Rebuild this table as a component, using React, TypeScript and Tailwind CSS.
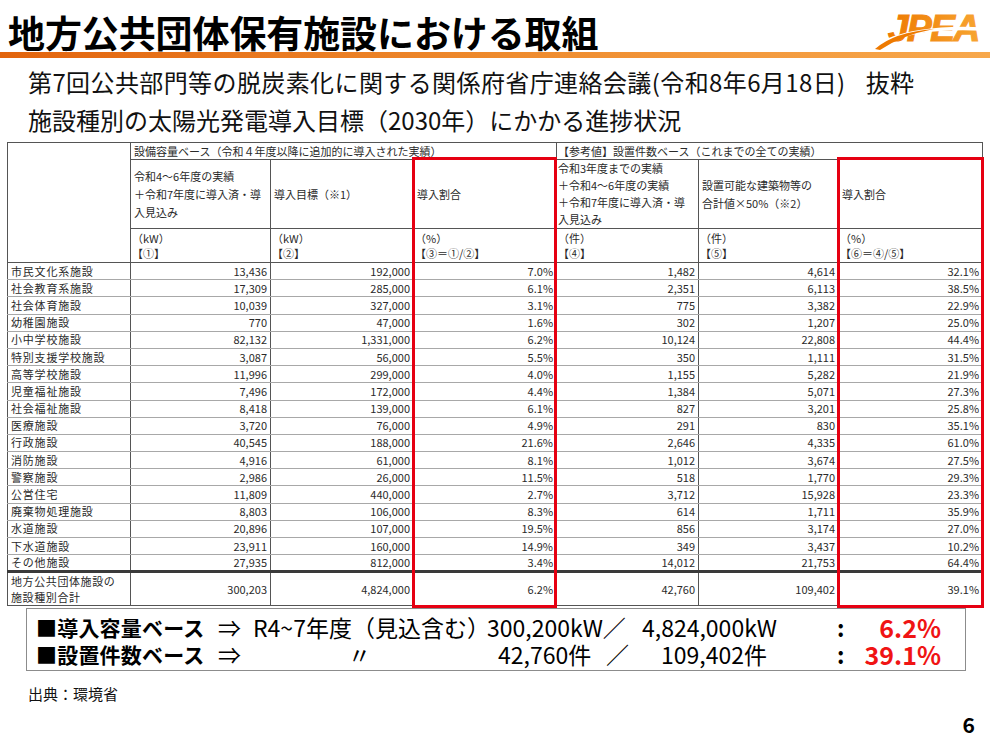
import React from "react";

type Row = [string, string, string, string, string, string, string];

const rows: Row[] = [
  ["市民文化系施設", "13,436", "192,000", "7.0%", "1,482", "4,614", "32.1%"],
  ["社会教育系施設", "17,309", "285,000", "6.1%", "2,351", "6,113", "38.5%"],
  ["社会体育施設", "10,039", "327,000", "3.1%", "775", "3,382", "22.9%"],
  ["幼稚園施設", "770", "47,000", "1.6%", "302", "1,207", "25.0%"],
  ["小中学校施設", "82,132", "1,331,000", "6.2%", "10,124", "22,808", "44.4%"],
  ["特別支援学校施設", "3,087", "56,000", "5.5%", "350", "1,111", "31.5%"],
  ["高等学校施設", "11,996", "299,000", "4.0%", "1,155", "5,282", "21.9%"],
  ["児童福祉施設", "7,496", "172,000", "4.4%", "1,384", "5,071", "27.3%"],
  ["社会福祉施設", "8,418", "139,000", "6.1%", "827", "3,201", "25.8%"],
  ["医療施設", "3,720", "76,000", "4.9%", "291", "830", "35.1%"],
  ["行政施設", "40,545", "188,000", "21.6%", "2,646", "4,335", "61.0%"],
  ["消防施設", "4,916", "61,000", "8.1%", "1,012", "3,674", "27.5%"],
  ["警察施設", "2,986", "26,000", "11.5%", "518", "1,770", "29.3%"],
  ["公営住宅", "11,809", "440,000", "2.7%", "3,712", "15,928", "23.3%"],
  ["廃棄物処理施設", "8,803", "106,000", "8.3%", "614", "1,711", "35.9%"],
  ["水道施設", "20,896", "107,000", "19.5%", "856", "3,174", "27.0%"],
  ["下水道施設", "23,911", "160,000", "14.9%", "349", "3,437", "10.2%"],
  ["その他施設", "27,935", "812,000", "3.4%", "14,012", "21,753", "64.4%"],
];

function Logo() {
  return (
    <svg width="112" height="48" viewBox="0 0 112 48" className="mt-[2px]">
      <defs>
        <linearGradient id="jpeaG" x1="0" y1="0" x2="1" y2="0">
          <stop offset="0" stopColor="#ee7a00" />
          <stop offset="1" stopColor="#f7a431" />
        </linearGradient>
      </defs>
      <text
        x="16"
        y="39"
        fontFamily="'Liberation Sans', Arial, sans-serif"
        fontWeight="900"
        fontStyle="italic"
        fontSize="37"
        letterSpacing="-1.5"
        fill="url(#jpeaG)"
        stroke="url(#jpeaG)"
        strokeWidth="1.2"
      >
        JPEA
      </text>
      <path d="M16 38 Q 52 24 111 27" stroke="#ffffff" strokeWidth="3.4" fill="none" />
      <path d="M3 47 Q 22 30 62 27 Q 30 33 8 48 Z" fill="#ee7a00" />
    </svg>
  );
}

const vb = "border-x border-[#555]";

export default function App() {
  return (
    <div
      className="relative w-[990px] h-[738px] overflow-hidden bg-white text-black"
      style={{ fontFamily: "'Noto Sans CJK JP', 'Noto Sans', sans-serif" }}
    >
      {/* header */}
      <div className="flex h-[52px] justify-between">
        <div className="pl-[8px] pt-[14px] text-[37px] font-bold leading-[37px] tracking-[-0.1px]">
          地方公共団体保有施設における取組
        </div>
        <div className="pr-[6px]">
          <Logo />
        </div>
      </div>
      <div className="h-[6px] bg-gradient-to-r from-[#e2640c] via-[#ee8a2c] to-[#f7a84c]" />

      {/* subtitles */}
      <div className="pl-[28px] pt-[4px] text-[24px] text-[#111]">
        <div className="h-[40px] whitespace-nowrap leading-[40px] tracking-[0.4px]">
          第7回公共部門等の脱炭素化に関する関係府省庁連絡会議(令和8年6月18日)
          <span className="ml-[20px]">抜粋</span>
        </div>
        <div className="h-[38px] whitespace-nowrap leading-[36px]">
          施設種別の太陽光発電導入目標（2030年）にかかる進捗状況
        </div>
      </div>

      {/* table */}
      <div className="relative ml-[7px] mt-[2px] w-[975px]">
        <table className="table-fixed border-collapse text-[11px] text-[#2a2a2a] w-[975px]">
          <colgroup>
            <col className="w-[123px]" />
            <col className="w-[140px]" />
            <col className="w-[143px]" />
            <col className="w-[143px]" />
            <col className="w-[142px]" />
            <col className="w-[140px]" />
            <col className="w-[144px]" />
          </colgroup>
          <tbody>
            <tr className="h-[17px]">
              <td rowSpan={3} className="border border-[#555]" />
              <td colSpan={3} className="border border-[#555] px-[3px] py-0 leading-[14px] whitespace-nowrap">
                設備容量ベース（令和４年度以降に追加的に導入された実績）
              </td>
              <td colSpan={3} className="border border-[#555] px-[1px] py-0 leading-[14px] whitespace-nowrap">
                【参考値】設置件数ベース（これまでの全ての実績）
              </td>
            </tr>
            <tr className="h-[68px]">
              <td className="border border-[#555] px-[3px] py-0 leading-[18px] align-middle">
                令和4～6年度の実績
                <br />＋令和7年度に導入済・導
                <br />
                入見込み
              </td>
              <td className="border border-[#555] px-[3px] py-0 leading-[18px] align-middle">導入目標（※1）</td>
              <td className="border border-[#555] px-[3px] py-0 leading-[18px] align-middle">導入割合</td>
              <td className="border border-[#555] px-[1px] py-0 leading-[17px] align-middle">
                令和3年度までの実績
                <br />＋令和4～6年度の実績
                <br />＋令和7年度に導入済・導
                <br />
                入見込み
              </td>
              <td className="border border-[#555] px-[3px] py-0 leading-[18px] align-middle">
                設置可能な建築物等の
                <br />
                合計値×50%（※2）
              </td>
              <td className="border border-[#555] px-[3px] py-0 leading-[18px] align-middle">導入割合</td>
            </tr>
            <tr className="h-[34px]">
              <td className="border border-[#555] px-[1px] py-0 leading-[15px] align-middle">
                （kW）
                <br />【①】
              </td>
              <td className="border border-[#555] px-[1px] py-0 leading-[15px] align-middle">
                （kW）
                <br />【②】
              </td>
              <td className="border border-[#555] px-[1px] py-0 leading-[15px] align-middle">
                （%）
                <br />【③＝①/②】
              </td>
              <td className="border border-[#555] px-[1px] py-0 leading-[15px] align-middle">
                （件）
                <br />【④】
              </td>
              <td className="border border-[#555] px-[1px] py-0 leading-[15px] align-middle">
                （件）
                <br />【⑤】
              </td>
              <td className="border border-[#555] px-[1px] py-0 leading-[15px] align-middle">
                （%）
                <br />【⑥＝④/⑤】
              </td>
            </tr>
            {rows.map((r, i) => (
              <tr key={i} className="h-[17.2px]">
                <td className={`${vb} border-b border-b-[#a8a8a8] px-[3px] py-0 leading-[15px] tracking-[0.8px] whitespace-nowrap`}>
                  {r[0]}
                </td>
                {r.slice(1).map((v, j) => (
                  <td
                    key={j}
                    className={`${vb} border-b border-b-[#a8a8a8] px-[3px] py-0 text-right leading-[15px]`}
                  >
                    {v}
                  </td>
                ))}
              </tr>
            ))}
            <tr className="h-[34px]">
              <td className={`${vb} border-t-[3px] border-t-[#3a3a3a] border-b border-b-[#555] px-[3px] py-0 leading-[16px] tracking-[0.6px]`}>
                地方公共団体施設の
                <br />
                施設種別合計
              </td>
              {["300,203", "4,824,000", "6.2%", "42,760", "109,402", "39.1%"].map((v, j) => (
                <td
                  key={j}
                  className={`${vb} border-t-[3px] border-t-[#3a3a3a] border-b border-b-[#555] px-[3px] py-0 text-right align-middle`}
                >
                  {v}
                </td>
              ))}
            </tr>
          </tbody>
        </table>
        {/* red highlight frames */}
        <div className="pointer-events-none absolute left-[405px] top-[15px] h-[451px] w-[145px] border-[3px] border-[#e60012]" />
        <div className="pointer-events-none absolute left-[830px] top-[15px] h-[451px] w-[147px] border-[3px] border-[#e60012]" />
      </div>

      {/* summary box */}
      <div className="ml-[26px] mt-[2px] h-[63px] w-[940px] border border-[#8c8c8c] bg-white pt-[5px] text-[23px] text-black">
        <div className="flex h-[27px] items-center whitespace-nowrap pl-[9px] leading-[27px]">
          <span className="w-[182px] text-[21px] font-bold tracking-[0.2px]">■導入容量ベース</span>
          <span className="w-[35px]">⇒</span>
          <span className="w-[234px]">R4~7年度（見込含む）</span>
          <span className="w-[155px]">300,200kW／</span>
          <span className="w-[150px]">4,824,000kW</span>
          <span className="w-[45px]" />
          <span className="w-[20px] font-bold">:</span>
          <span className="w-[84px] text-right text-[25px] font-bold text-[#f01414]">6.2%</span>
        </div>
        <div className="flex h-[27px] items-center whitespace-nowrap pl-[9px] leading-[27px]">
          <span className="w-[182px] text-[21px] font-bold tracking-[0.2px]">■設置件数ベース</span>
          <span className="w-[35px]">⇒</span>
          <span className="w-[95px]" />
          <span className="w-[150px]">〃</span>
          <span className="w-[108px]">42,760件</span>
          <span className="w-[55px]">／</span>
          <span className="w-[176px]">109,402件</span>
          <span className="w-[20px] font-bold">:</span>
          <span className="w-[84px] text-right text-[25px] font-bold text-[#f01414]">39.1%</span>
        </div>
      </div>

      {/* footer */}
      <div className="ml-[28px] mt-[13px] h-[20px] text-[15px] leading-[20px] text-[#111]">出典：環境省</div>
      <div className="mt-[8px] h-[24px] pr-[15px] text-right text-[21px] font-bold leading-[24px]">6</div>
    </div>
  );
}
